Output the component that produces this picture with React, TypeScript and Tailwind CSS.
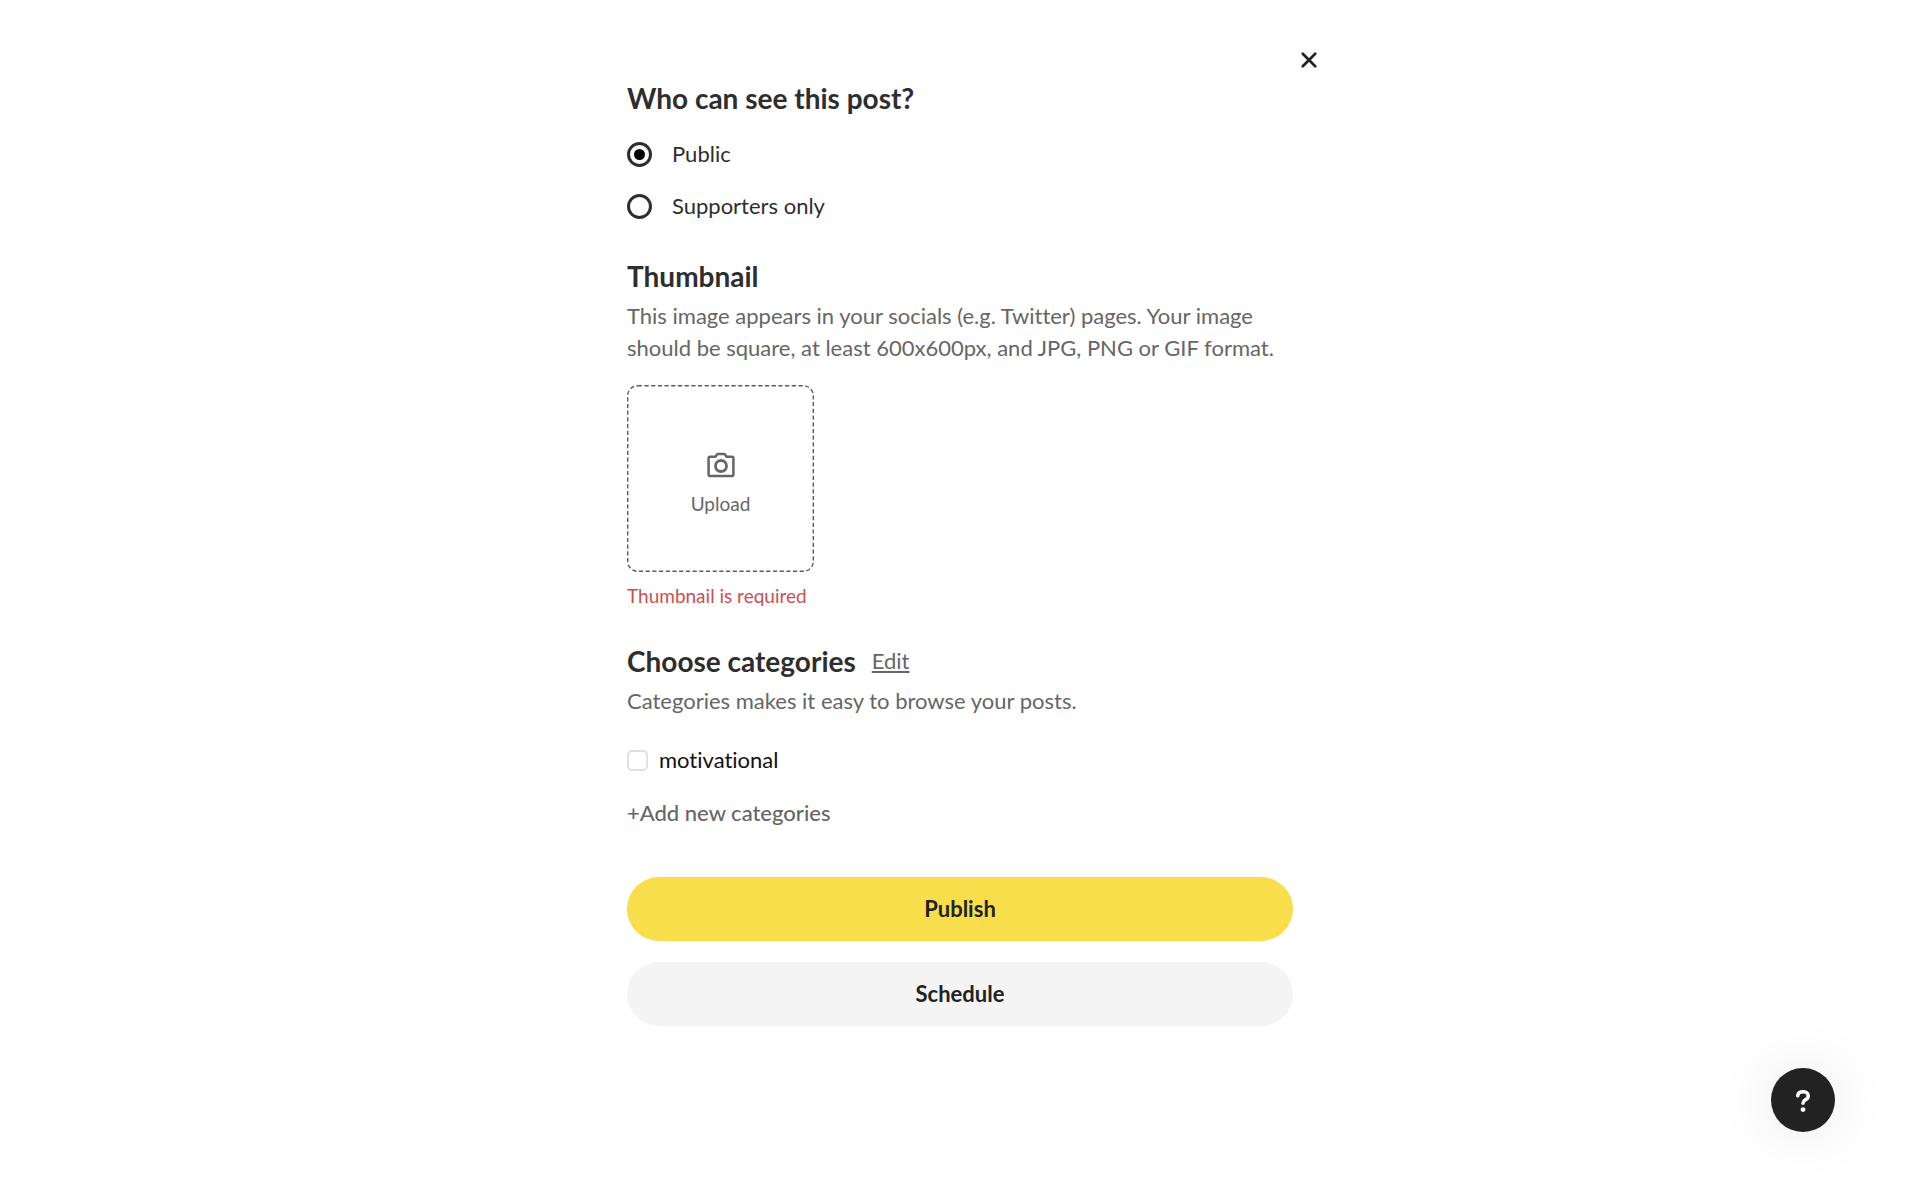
import { useState } from 'react'

const visibilityOptions = [
  { id: 'public', label: 'Public' },
  { id: 'supporters', label: 'Supporters only' },
]

function CloseIcon() {
  return (
    <svg width="16" height="16" viewBox="0 0 16 16" fill="none" stroke="#222222" strokeWidth="2.7" strokeLinecap="round">
      <path d="M1.8 1.8l12.4 12.4M14.2 1.8L1.8 14.2" />
    </svg>
  )
}

function CameraIcon() {
  return (
    <svg width="28" height="26" viewBox="0 0 28 26" fill="none" stroke="#666666" strokeWidth="2.5" strokeLinejoin="round">
      <path d="M2.8 4.8h5.6l2-2.7h7.2l2 2.7h5.6a1.2 1.2 0 0 1 1.2 1.2v16.8a1.2 1.2 0 0 1-1.2 1.2H2.8a1.2 1.2 0 0 1-1.2-1.2V6a1.2 1.2 0 0 1 1.2-1.2z" />
      <circle cx="14" cy="14" r="5.5" strokeWidth="2.8" />
    </svg>
  )
}

function DashedFrame() {
  return (
    <svg className="absolute inset-0 size-full" viewBox="0 0 187 187" fill="none">
      <rect x="0.7" y="0.7" width="185.6" height="185.6" rx="10" stroke="#5c5c5c" strokeWidth="1.4" strokeDasharray="4.2 2.5" />
    </svg>
  )
}

function SectionTitle({ children }: { children: string }) {
  return <h2 className="text-[28px] leading-9 font-bold text-[#2e2e2e]">{children}</h2>
}

export default function App() {
  const [visibility, setVisibility] = useState('public')

  return (
    <main className="min-h-screen bg-white pb-12 text-[22px] leading-8 text-[#666666] font-[Lato,sans-serif] [font-variant-ligatures:none]">
      <div className="mx-auto w-full max-w-[710px] px-[22px] pt-13">
        {/* Close */}
        <div className="-mr-6 mb-3 flex justify-end">
          <button type="button" aria-label="Close" className="cursor-pointer">
            <CloseIcon />
          </button>
        </div>

        {/* Visibility */}
        <section>
          <SectionTitle>Who can see this post?</SectionTitle>
          <div className="mt-[22px] flex flex-col gap-5 text-[#2e2e2e]">
            {visibilityOptions.map((option) => (
              <label key={option.id} className="flex cursor-pointer items-center gap-5">
                <input
                  type="radio"
                  name="visibility"
                  value={option.id}
                  checked={visibility === option.id}
                  onChange={() => setVisibility(option.id)}
                  className="grid size-[25px] appearance-none place-content-center rounded-full border-[3px] border-[#2e2e2e] before:size-[11px] before:rounded-full checked:before:bg-black"
                />
                {option.label}
              </label>
            ))}
          </div>
        </section>

        {/* Thumbnail */}
        <section className="mt-9">
          <SectionTitle>Thumbnail</SectionTitle>
          <p className="mt-1.5">
            This image appears in your socials (e.g. Twitter) pages. Your image should be square, at least 600x600px, and
            JPG, PNG or GIF format.
          </p>
          <button
            type="button"
            className="relative mt-[21px] flex size-[187px] cursor-pointer flex-col items-center justify-center gap-3.5 rounded-xl pt-2.5 text-[19px] leading-6"
          >
            <DashedFrame />
            <CameraIcon />
            Upload
          </button>
          <p className="mt-3 text-[19px] leading-6 text-[#cc4f4f]">Thumbnail is required</p>
        </section>

        {/* Categories */}
        <section className="mt-[35px]">
          <div className="flex items-center gap-4">
            <SectionTitle>Choose categories</SectionTitle>
            <a href="#edit" className="underline underline-offset-2">Edit</a>
          </div>
          <p className="mt-1.5">Categories makes it easy to browse your posts.</p>
          <label className="mt-[27px] flex cursor-pointer items-center gap-[11px] text-[#111111]">
            <input type="checkbox" className="size-[21px] appearance-none rounded-[5px] border-2 border-[#e0e0e0] checked:bg-[#f8de4a]" />
            motivational
          </label>
          <button type="button" className="mt-[21px] block cursor-pointer font-medium">+Add new categories</button>
        </section>

        {/* Actions */}
        <div className="mt-12 flex flex-col gap-[21px] font-bold text-[#222222]">
          <button type="button" className="h-16 cursor-pointer rounded-full bg-[#f8de4a]">Publish</button>
          <button type="button" className="h-16 cursor-pointer rounded-full bg-[#f4f4f4]">Schedule</button>
        </div>
      </div>

      <button
        type="button"
        aria-label="Help"
        className="fixed right-[85px] bottom-[68px] flex size-16 cursor-pointer items-center justify-center rounded-full bg-[#222222] pt-0.5 shadow-[0_0_60px_rgba(0,0,0,0.1)]"
      >
        <svg width="16" height="24" viewBox="0 0 16 24" fill="none">
          <path d="M2.7 6.6C3.1 4.2 5.1 2.8 8 2.8c3.1 0 5.2 1.6 5.2 4.1 0 1.9-1.1 2.8-2.8 3.9-1.6 1-2.4 1.8-2.4 3.4" stroke="#ffffff" strokeWidth="3.6" strokeLinecap="round" strokeLinejoin="round" />
          <circle cx="8" cy="20.6" r="2.4" fill="#ffffff" />
        </svg>
      </button>
    </main>
  )
}
